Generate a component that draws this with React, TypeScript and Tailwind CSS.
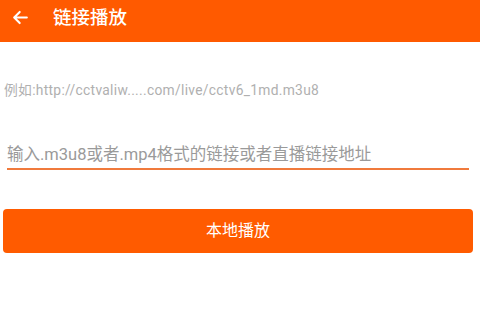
import React from "react";

export default function App() {
  return (
    <div
      className="w-[480px] h-[309px] bg-white flex flex-col overflow-hidden"
      style={{ fontFamily: 'Roboto, "Noto Sans CJK SC", sans-serif' }}
    >
      <div className="h-[42px] bg-[#ff5a00] flex items-start pt-[8px] pl-[11px] shrink-0">
        <svg width="19" height="19" viewBox="0 0 24 24" className="mt-[0px]">
          <path
            d="M20 12H5M11 5l-7 7 7 7"
            fill="none"
            stroke="#ffffff"
            strokeWidth="2.6"
            strokeLinecap="round"
            strokeLinejoin="round"
          />
        </svg>
        <div className="ml-[23px] text-white text-[18.5px] leading-[20px] font-medium">链接播放</div>
      </div>
      <div className="mt-[40px] pl-[4px] text-[13.8px] leading-[16px] tracking-[0.3px] text-[#b0b0b0]">
        例如:http://cctvaliw.....com/live/cctv6_1md.m3u8
      </div>
      <div className="mt-[47px] mx-[7px] mr-[11px] border-b-2 border-[#f07a3c] pb-[3px]">
        <div className="text-[16.5px] leading-[20px] text-[#9a9a9a]">
          输入.m3u8或者.mp4格式的链接或者直播链接地址
        </div>
      </div>
      <div className="mt-[39px] mx-[3px] mr-[7px] h-[44px] rounded-[4px] bg-[#ff5b00] flex items-center justify-center text-white text-[16px]">
        本地播放
      </div>
    </div>
  );
}
